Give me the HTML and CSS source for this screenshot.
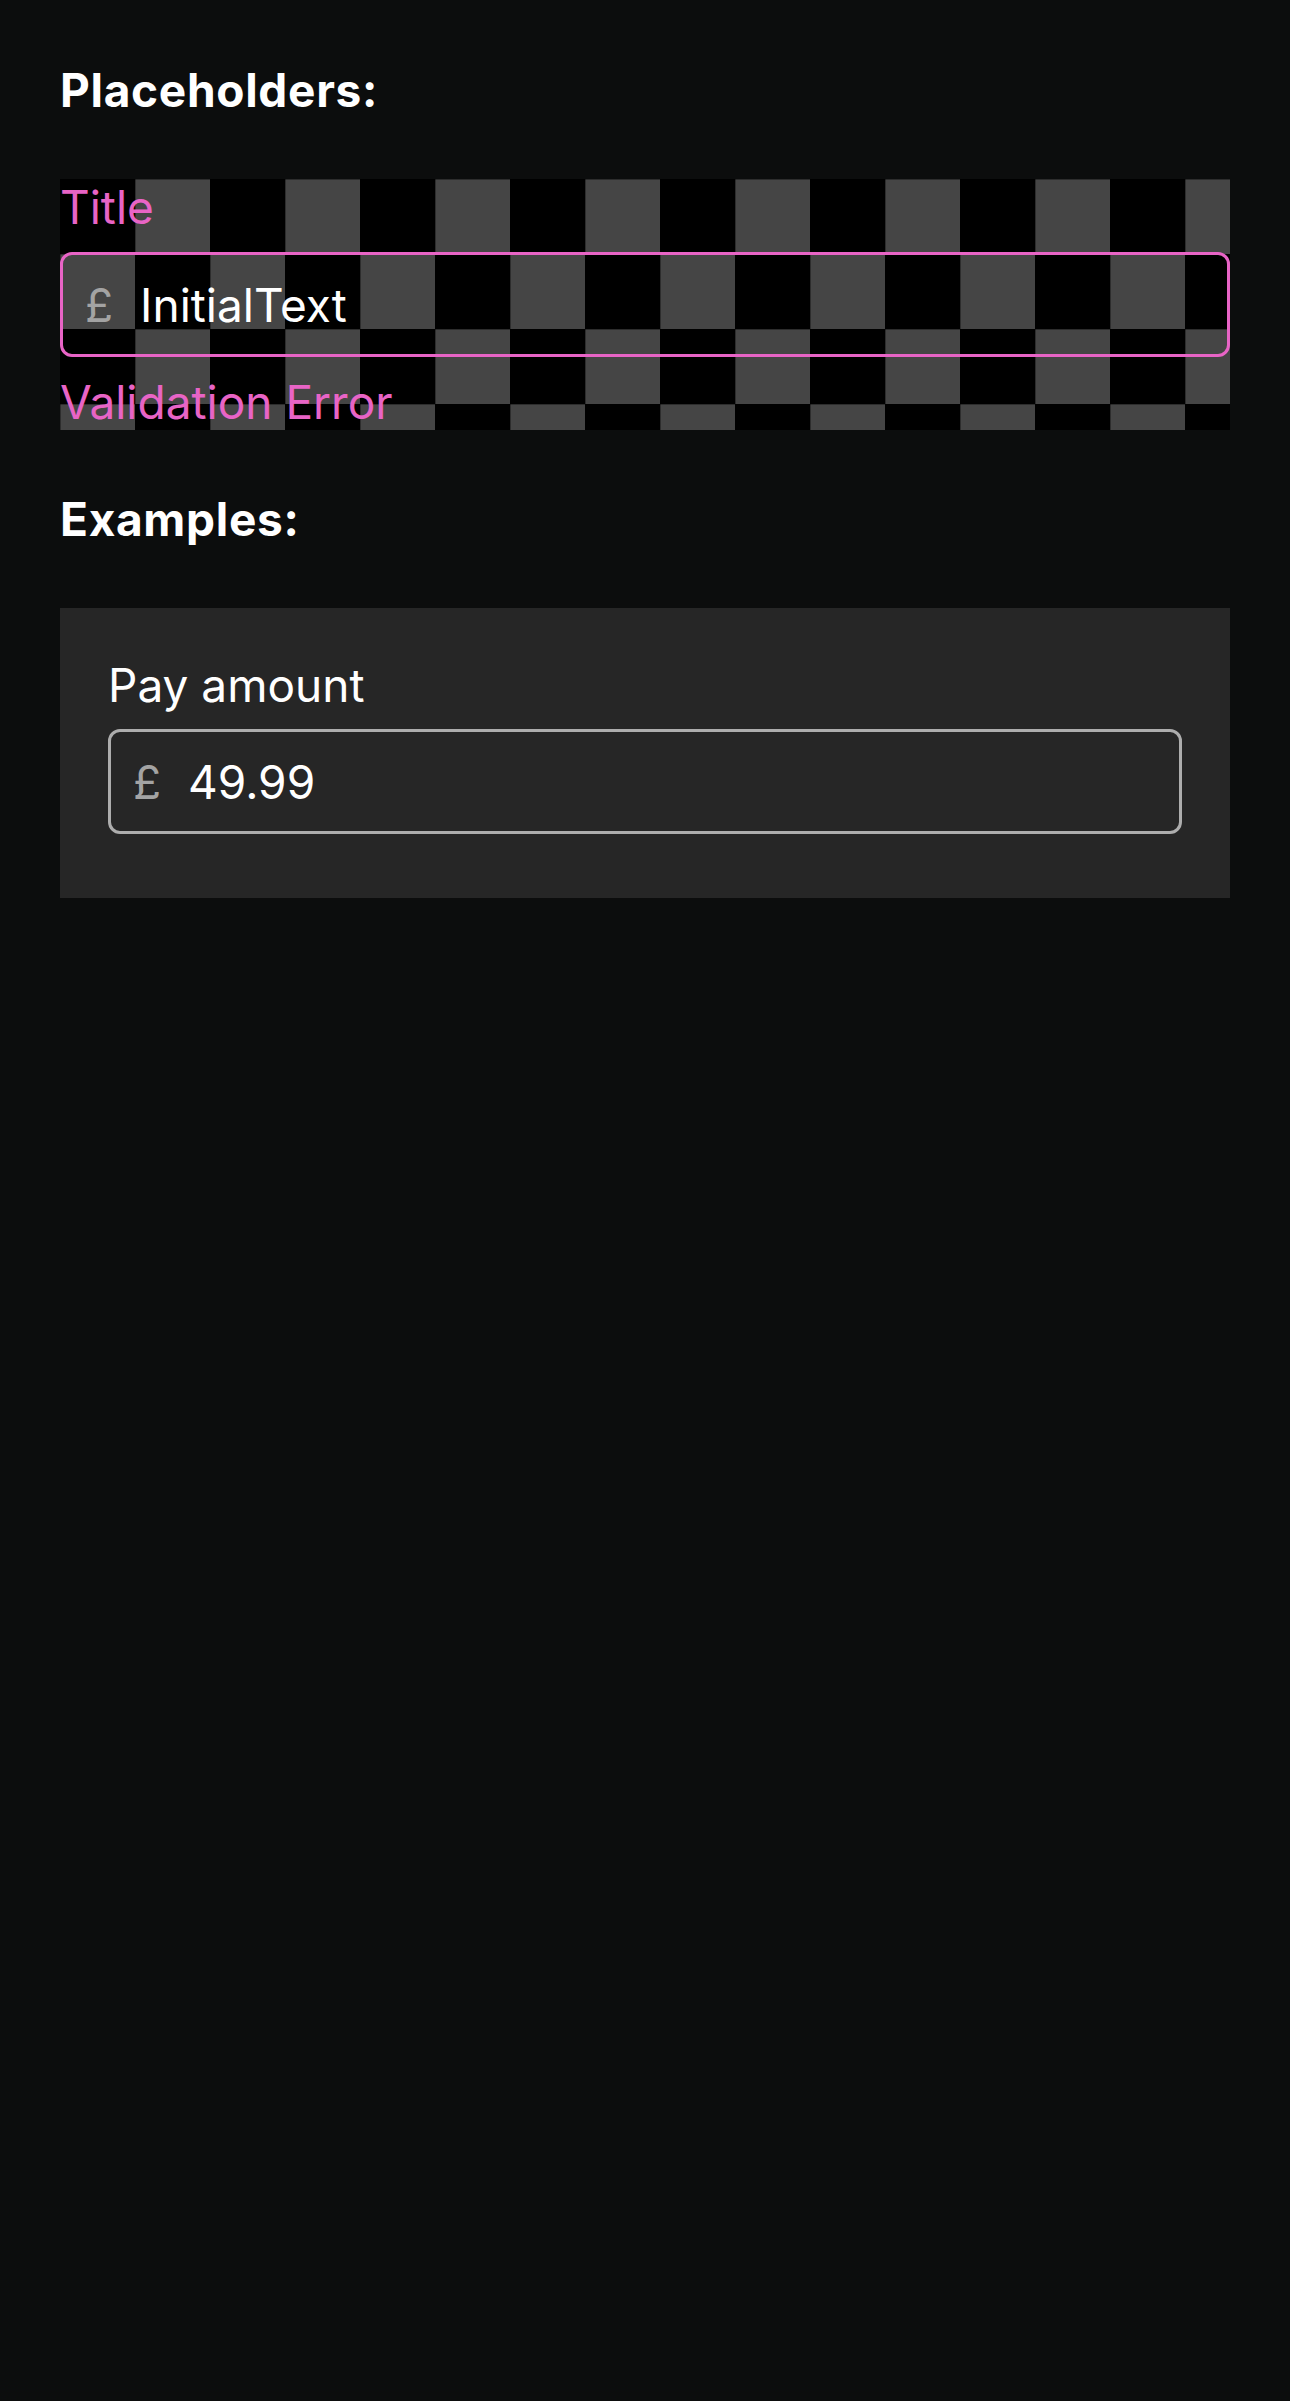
FILE: index.html
```html
<!DOCTYPE html>
<html lang="en">
<head>
<meta charset="utf-8">
<title>Text field</title>
<link rel="stylesheet" href="styles.css">
</head>
<body>
<main class="page">
  <h2 class="heading">Placeholders:</h2>
  <section class="preview">
    <div class="label label--error">Title</div>
    <div class="field field--error">
      <span class="currency">£</span>
      <span class="value">InitialText</span>
    </div>
    <div class="label label--error">Validation Error</div>
  </section>
  <h2 class="heading">Examples:</h2>
  <section class="card">
    <div class="label">Pay amount</div>
    <div class="field">
      <span class="currency">£</span>
      <span class="value">49.99</span>
    </div>
  </section>
</main>
</body>
</html>
```
FILE: styles.css
```css
html, body {
  margin: 0;
  padding: 0;
  background: #0c0d0d;
}
body {
  min-height: 2401px;
  font-family: Inter, "Noto Sans", sans-serif;
  color: #ffffff;
}
.page {
  display: flex;
  flex-direction: column;
  gap: 61px;
  padding: 62px 60px;
}
.heading {
  margin: 0;
  font-size: 46px;
  font-weight: 700;
  letter-spacing: 0.7px;
  line-height: normal;
  color: #ffffff;
}
.preview {
  display: flex;
  flex-direction: column;
  gap: 17px;
  background-color: #000;
  background-image:
    linear-gradient(90deg, rgba(0,0,0,0.35) 1px, transparent 1px),
    linear-gradient(rgba(0,0,0,0.35) 1px, transparent 1px),
    repeating-conic-gradient(#454545 0 25%, #000 0 50%);
  background-size: 75px 75px, 75px 75px, 150px 150px;
  background-position: 0 0;
}
.label {
  font-size: 46px;
  line-height: normal;
  font-weight: 400;
  color: #ffffff;
}
.label--error {
  color: #e864c6;
}
.field {
  box-sizing: border-box;
  height: 105px;
  display: flex;
  align-items: center;
  gap: 27px;
  padding-left: 22px;
  border: 3px solid #adadad;
  border-radius: 12px;
  font-size: 46px;
}
.field--error {
  border-color: #e864c6;
}
.currency {
  color: #a3a3a3;
}
.value {
  color: #ffffff;
}
.card {
  display: flex;
  flex-direction: column;
  gap: 16px;
  background: #262626;
  padding: 49px 48px 64px;
}
```
